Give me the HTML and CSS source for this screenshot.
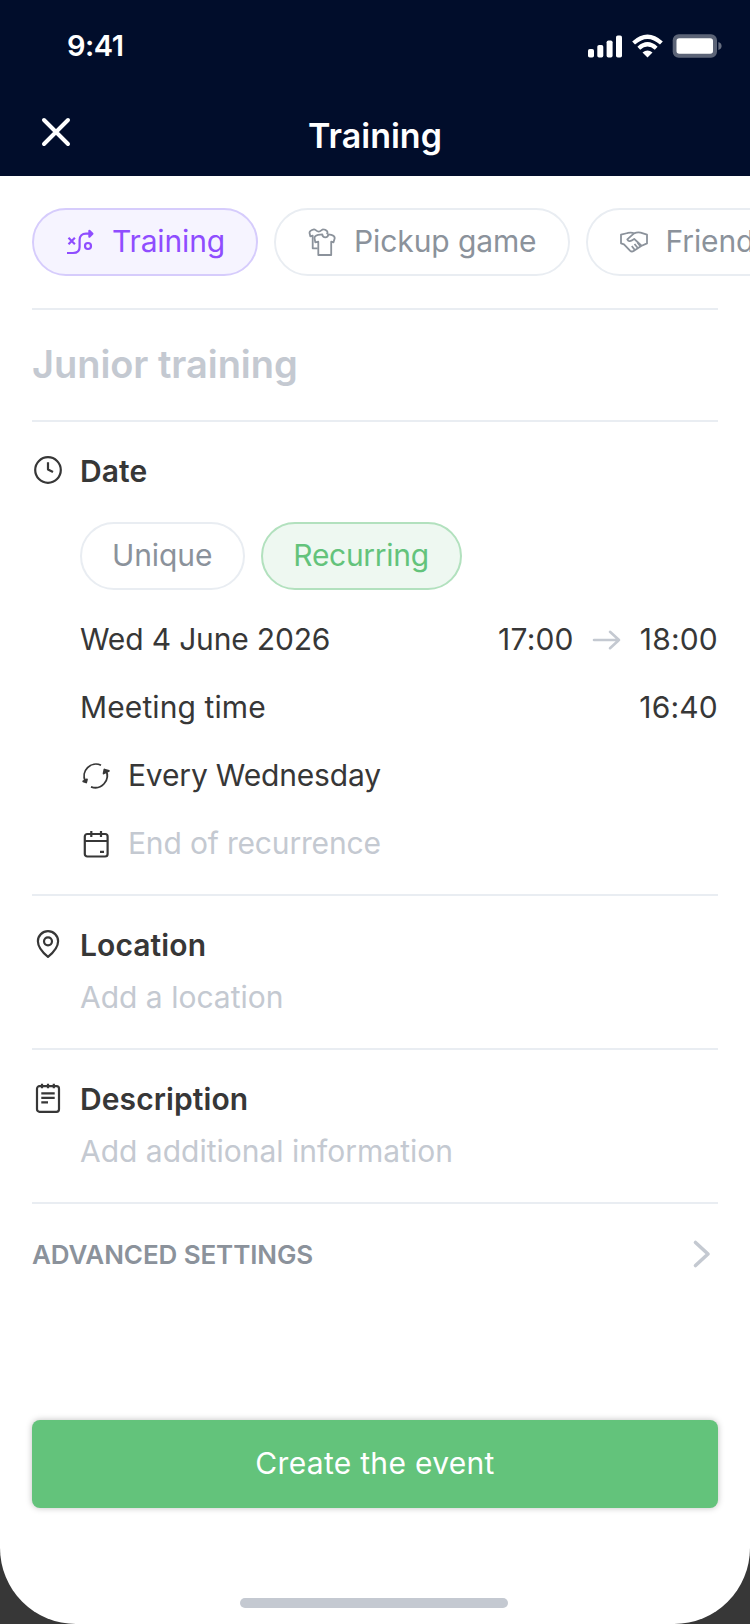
FILE: index.html
```html
<!DOCTYPE html>
<html lang="en">
<head>
    <meta charset="UTF-8">
    <meta name="viewport" content="width=device-width, initial-scale=1.0">
    <title>Training</title>
    <link rel="stylesheet" href="styles.css">
</head>
<body>
    <div class="screen">
        <header class="header">
            <div class="status-bar">
                <span class="time">9:41</span>
                <svg class="status-icons" width="136" height="26" viewBox="0 0 136 26" fill="#fff">
                    <rect x="1" y="16" width="6" height="8.5" rx="1.8"/>
                    <rect x="10.3" y="12" width="6" height="12.5" rx="1.8"/>
                    <rect x="19.6" y="7.5" width="6" height="17" rx="1.8"/>
                    <rect x="29" y="2.5" width="6" height="22" rx="1.8"/>
                    <g fill="none" stroke="#fff" stroke-width="4.2">
                        <path d="M46.6 10Q60.5-2.6 74.4 10"/>
                        <path d="M51.8 15.2Q60.5 7.4 69.2 15.2"/>
                    </g>
                    <path d="M60.5 24.6l-5-5q5-4 10 0z"/>
                    <rect x="85.7" y="1.2" width="44.3" height="23.6" rx="6" opacity=".36"/>
                    <rect x="89.5" y="5.2" width="36.5" height="15.6" rx="2.8"/>
                    <path d="M131.4 9q3.2 1.2 3.2 4t-3.2 4z" opacity=".4"/>
                </svg>
            </div>
            <div class="nav-bar">
                <svg class="close" width="32" height="32" viewBox="0 0 32 32">
                    <path d="M4 4l24 24M28 4L4 28" fill="none" stroke="#fff" stroke-width="4" stroke-linecap="round"/>
                </svg>
                <h1>Training</h1>
            </div>
        </header>

        <main class="content">
            <div class="chips types">
                <div class="chip purple">
                    <svg class="icon" viewBox="0 0 32 32">
                        <path d="M4.5 11.8l6.4 6.4M10.9 11.8l-6.4 6.4M3 27h6c4 0 6.6-2 6.6-6v-7c0-4 2.6-6.3 6.4-6.3h6"/>
                        <path d="M25.4 4.8l3 2.9-3 3z" fill="currentColor"/>
                        <circle cx="24" cy="20" r="3"/>
                    </svg>
                    <span>Training</span>
                </div>
                <div class="chip outlined">
                    <svg class="icon thin" viewBox="0 0 32 32">
                        <path d="M14.3 8.3c.2 2 1.4 3 3 3s2.8-1 3-3l3 .6c2 .5 3.6 1.7 3.4 3.4l-1.2 4-2.3-.6V29H10.3V15.7l-3 .6-.8-4c-.2-1.7 1.5-3 3.6-3.5z"/>
                        <path d="M9.7 22.3h-5V9.7l-2.4.6-.8-3.5C1.6 5 3.4 3.9 6 3.3c1.2-.3 2.4 2.3 4.7 2.3s3.4-2.6 4.6-2.3c2.3.4 4.2 1.4 4.2 3.2L19 8.3"/>
                    </svg>
                    <span>Pickup game</span>
                </div>
                <div class="chip outlined">
                    <svg class="icon thin" viewBox="0 0 32 32">
                        <path d="M14 7.4c-2.2-1.2-4.2-.8-6.3-.4L1 8.7v8.6l3 1 6 6.3c1.2 1.2 2.4 1.2 3.6.4l7.6-5 5.8-2.6V8.7l-6.4-2.1c-2.2-.6-4.5-.2-6.6.8l-6.7 6c.8 2 2.8 2 4.5 1l2.4-1.5 7 6.6"/>
                        <path d="M14.5 18l3.3 4M11.8 20l3 4M17.5 16.5l2.8 3.7"/>
                    </svg>
                    <span>Friendly game</span>
                </div>
            </div>

            <div class="event-title">Junior training</div>

            <section class="section date">
                <div class="section-title">
                    <svg class="icon raised" viewBox="0 0 32 32">
                        <circle cx="16" cy="16" r="12.8"/>
                        <path d="M16 8.3v7.2l5 2.6"/>
                    </svg>
                    <h2>Date</h2>
                </div>
                <div class="indent">
                    <div class="chips">
                        <div class="chip"><span>Unique</span></div>
                        <div class="chip green"><span>Recurring</span></div>
                    </div>
                    <div class="row">
                        <span>Wed 4 June 2026</span>
                        <span class="hours">
                            <span>17:00</span>
                            <svg class="arrow" width="30" height="22" viewBox="0 0 30 22">
                                <path d="M2 11h25M18 2.8l9 8.2-9 8.2" fill="none" stroke="#c4c9d1" stroke-width="2.6" stroke-linecap="round" stroke-linejoin="round"/>
                            </svg>
                            <span>18:00</span>
                        </span>
                    </div>
                    <div class="row">
                        <span class="label">Meeting time</span>
                        <span class="hours">16:40</span>
                    </div>
                    <div class="row with-icon">
                        <svg class="icon thin" viewBox="0 0 32 32">
                            <path d="M21 6.2A11.9 11.9 0 0 0 5.2 22M11 27.8A11.9 11.9 0 0 0 26 11.5"/>
                            <path d="M3.2 22.3l3 1.2.8-3.2zM23.6 14.5l.8-4 4.5 1.4z" fill="currentColor"/>
                        </svg>
                        <span>Every Wednesday</span>
                    </div>
                    <div class="row with-icon">
                        <svg class="icon" viewBox="0 0 32 32">
                            <rect x="4.8" y="7" width="22.8" height="22.5" rx="2.5"/>
                            <path d="M4.8 14h22.8M11.3 4v6M21 4v6M20 24.8h4"/>
                        </svg>
                        <span class="placeholder">End of recurrence</span>
                    </div>
                </div>
            </section>

            <section class="section">
                <div class="section-title">
                    <svg class="icon raised" viewBox="0 0 32 32">
                        <path d="M16 28.8C12 25.6 5.9 19.5 5.9 13.2a10.1 10 0 0 1 20.2 0C26.1 19.5 20 25.6 16 28.8z"/>
                        <circle cx="16" cy="13.3" r="4"/>
                    </svg>
                    <h2>Location</h2>
                </div>
                <div class="indent placeholder">Add a location</div>
            </section>

            <section class="section">
                <div class="section-title">
                    <svg class="icon raised" viewBox="0 0 32 32">
                        <rect x="5" y="4.2" width="22" height="25.6" rx="2.5"/>
                        <path d="M10 1.8v4.4M16 1.8v4.4M21.8 1.8v4.4M9.3 11.4h13.4M9.3 15.9h13.4M9.3 20.4h6.7"/>
                    </svg>
                    <h2>Description</h2>
                </div>
                <div class="indent placeholder">Add additional information</div>
            </section>

            <div class="advanced">
                <span>ADVANCED SETTINGS</span>
                <svg width="32" height="32" viewBox="0 0 32 32">
                    <path d="M9.5 4.5L22 16 9.5 27.5" fill="none" stroke="#c4c9d1" stroke-width="3.6" stroke-linecap="round" stroke-linejoin="round"/>
                </svg>
            </div>

            <button class="create" type="button">Create the event</button>
        </main>
        <div class="home-indicator"></div>
    </div>
</body>
</html>
```
FILE: styles.css
```css
* {
    box-sizing: border-box;
}
body {
    margin: 0;
    background: #373737;
    font-family: Inter, "Liberation Sans", sans-serif;
    font-size: 30px;
    line-height: 36px;
    color: #373737;
}
h1, h2 {
    margin: 0;
    font-weight: 600;
}
.screen {
    display: flex;
    flex-direction: column;
    width: 750px;
    height: 1624px;
    background: #fff;
    border-radius: 0 0 76px 76px;
    overflow: hidden;
}
.header {
    height: 176px;
    background: #010d2b;
    color: #fff;
}
.status-bar {
    display: flex;
    justify-content: space-between;
    align-items: center;
    height: 92px;
    padding: 0 27px 0 67px;
}
.time {
    font-size: 29px;
    font-weight: 600;
    letter-spacing: -0.5px;
}
.nav-bar {
    display: grid;
    grid-template-columns: 32px 1fr 32px;
    align-items: center;
    height: 84px;
    padding: 0 40px;
}
.nav-bar h1 {
    font-size: 34px;
    line-height: 40px;
    text-align: center;
    padding-top: 4px;
}
.close {
    margin-bottom: 4px;
}
.content {
    padding: 0 32px;
}
.chips {
    display: flex;
    gap: 16px;
}
.types {
    padding: 32px 0;
    margin-right: -32px;
    overflow: hidden;
}
.chip {
    display: flex;
    align-items: center;
    flex-shrink: 0;
    height: 68px;
    padding: 0 31px 0 30px;
    border: 2px solid #e9edf2;
    border-radius: 34px;
    color: #8b929b;
    letter-spacing: -0.1px;
    gap: 16px;
}
.chip span {
    margin-top: -2px;
}
.outlined {
    padding-left: 32px;
    gap: 14px;
}
.purple {
    background: #f6f4ff;
    border-color: #d6ccfc;
    color: #8f4dff;
    letter-spacing: -0.15px;
}
.green {
    background: #eef8f1;
    border-color: #b2e1be;
    color: #63c37b;
    letter-spacing: -0.3px;
}
.icon {
    width: 32px;
    height: 32px;
    flex-shrink: 0;
    fill: none;
    stroke: currentColor;
    stroke-width: 2.2;
    stroke-linejoin: round;
}
.thin {
    stroke-width: 1.8;
}
.raised {
    position: relative;
    top: -1px;
}
.event-title {
    height: 114px;
    border: solid #e9edf2;
    border-width: 2px 0;
    font-size: 38px;
    font-weight: 600;
    line-height: 108px;
    letter-spacing: -0.05px;
    color: #c4c9d1;
}
.section {
    padding: 31px 0 33px;
    border-bottom: 2px solid #e9edf2;
}
.section-title {
    display: flex;
    align-items: center;
    gap: 16px;
    margin-bottom: 16px;
}
.section-title h2 {
    font-size: 30px;
    letter-spacing: 0.1px;
}
.indent {
    padding-left: 48px;
}
.date {
    padding-bottom: 17px;
}
.date .section-title {
    margin-bottom: 33px;
}
.date .chips {
    margin-bottom: 15px;
}
.row {
    display: flex;
    align-items: center;
    justify-content: space-between;
    height: 68px;
    letter-spacing: -0.17px;
}
.label {
    letter-spacing: 0.1px;
}
.with-icon {
    justify-content: flex-start;
    gap: 16px;
}
.hours {
    display: flex;
    align-items: center;
    letter-spacing: 0.2px;
}
.arrow {
    margin: 2px 18px 0;
}
.placeholder {
    color: #c4c9d1;
}
.advanced {
    display: flex;
    align-items: center;
    justify-content: space-between;
    height: 100px;
    font-size: 26px;
    font-weight: 600;
    letter-spacing: -0.1px;
    color: #8b929b;
}
.advanced span {
    padding-top: 2px;
}
.create {
    display: block;
    width: 100%;
    height: 88px;
    margin-top: 116px;
    padding-bottom: 3px;
    border: none;
    border-radius: 8px;
    background: #63c37b;
    box-shadow: 0 0 6px rgba(0, 0, 0, 0.25);
    color: #fff;
    font: inherit;
    font-weight: 400;
    letter-spacing: 0.3px;
}
.home-indicator {
    width: 268px;
    height: 10px;
    margin: auto auto 16px 240px;
    border-radius: 5px;
    background: #c4c9d1;
}
```
